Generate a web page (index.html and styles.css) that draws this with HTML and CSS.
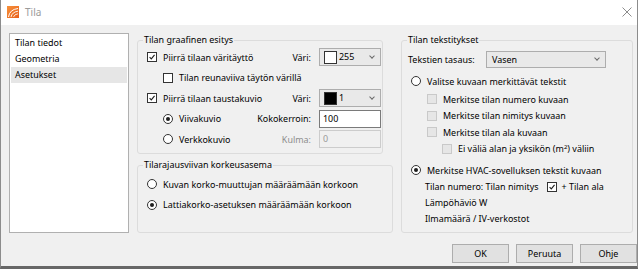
FILE: index.html
```html
<!DOCTYPE html>
<html>
<head>
<meta charset="utf-8">
<title>Tila</title>
<link rel="stylesheet" href="styles.css">
</head>
<body>
<div class="window">
  <div class="titlebar">
    <svg class="app-icon" width="12" height="12" viewBox="0 0 12 12">
      <defs>
        <linearGradient id="og" x1="0" y1="0" x2="1" y2="1">
          <stop offset="0" stop-color="#f7913a"/>
          <stop offset="1" stop-color="#e8601c"/>
        </linearGradient>
      </defs>
      <rect width="12" height="12" fill="url(#og)"/>
      <path d="M1.5 11 Q2.5 3.5 11 2.5" fill="none" stroke="#fff" stroke-width="1"/>
      <path d="M4 11 Q5 6 11 5.2" fill="none" stroke="#fff" stroke-width="0.9"/>
      <path d="M6.5 11 Q7.3 8.3 11 7.8" fill="none" stroke="#fff" stroke-width="0.8"/>
    </svg>
    <span class="title">Tila</span>
    <svg class="close" width="10" height="10" viewBox="0 0 10 10">
      <path d="M0.5 0.5 L9.5 9.5 M9.5 0.5 L0.5 9.5" stroke="#8c8c8c" stroke-width="1"/>
    </svg>
  </div>
  <div class="client">
    <div class="main">
      <ul class="navlist">
        <li>Tilan tiedot</li>
        <li>Geometria</li>
        <li class="selected">Asetukset</li>
      </ul>
      <div class="midcol">
        <fieldset class="group g1">
          <legend>Tilan graafinen esitys</legend>
          <div class="g1-grid">
            <label class="opt"><span class="cb"><svg viewBox="0 0 10 10"><path d="M2 5.2 L4.1 7.3 L8.2 2.4"/></svg></span><span>Piirrä tilaan väritäyttö</span></label>
            <span class="flabel">Väri:</span>
            <div class="combo"><span class="swatch white"></span><span class="cval">255</span><span class="arrow"></span></div>

            <label class="opt indent full"><span class="cb"></span><span>Tilan reunaviiva täytön värillä</span></label>

            <label class="opt"><span class="cb"><svg viewBox="0 0 10 10"><path d="M2 5.2 L4.1 7.3 L8.2 2.4"/></svg></span><span>Piirrä tilaan taustakuvio</span></label>
            <span class="flabel">Väri:</span>
            <div class="combo"><span class="swatch black"></span><span class="cval">1</span><span class="arrow"></span></div>

            <label class="opt indent"><span class="rb on"></span><span>Viivakuvio</span></label>
            <span class="flabel">Kokokerroin:</span>
            <div class="field">100</div>

            <label class="opt indent"><span class="rb"></span><span>Verkkokuvio</span></label>
            <span class="flabel dim">Kulma:</span>
            <div class="field disabled">0</div>
          </div>
        </fieldset>
        <fieldset class="group g2">
          <legend>Tilarajausviivan korkeusasema</legend>
          <div class="g2-list">
            <label class="opt"><span class="rb"></span><span>Kuvan korko-muuttujan määräämään korkoon</span></label>
            <label class="opt"><span class="rb on"></span><span>Lattiakorko-asetuksen määräämään korkoon</span></label>
          </div>
        </fieldset>
      </div>
      <fieldset class="group g3">
        <legend>Tilan tekstitykset</legend>
        <div class="g3-body">
          <div class="align-row">
            <span class="align-label">Tekstien tasaus:</span>
            <div class="combo wide"><span class="cval">Vasen</span><span class="arrow"></span></div>
          </div>
          <div class="r-row"><label class="opt"><span class="rb"></span><span>Valitse kuvaan merkittävät tekstit</span></label></div>
          <div class="sub">
            <div class="c-row"><label class="opt"><span class="cb off"></span><span>Merkitse tilan numero kuvaan</span></label></div>
            <div class="c-row"><label class="opt"><span class="cb off"></span><span>Merkitse tilan nimitys kuvaan</span></label></div>
            <div class="c-row"><label class="opt"><span class="cb off"></span><span>Merkitse tilan ala kuvaan</span></label></div>
            <div class="c-row subsub"><label class="opt"><span class="cb off"></span><span>Ei väliä alan ja yksikön (m<sup>2</sup>) väliin</span></label></div>
          </div>
          <div class="r-row hvac"><label class="opt"><span class="rb on"></span><span>Merkitse HVAC-sovelluksen tekstit kuvaan</span></label></div>
          <div class="hvac-lines">
            <div class="t-row"><span>Tilan numero: Tilan nimitys</span><span class="cb inline"><svg viewBox="0 0 10 10"><path d="M2 5.2 L4.1 7.3 L8.2 2.4"/></svg></span><span>+ Tilan ala</span></div>
            <div class="t-row"><span>Lämpöhäviö W</span></div>
            <div class="t-row"><span>Ilmamäärä / IV-verkostot</span></div>
          </div>
        </div>
      </fieldset>
    </div>
    <div class="buttons">
      <button class="btn">OK</button>
      <button class="btn">Peruuta</button>
      <button class="btn">Ohje</button>
    </div>
  </div>
</div>
</body>
</html>
```

FILE: styles.css
```css
* { box-sizing: border-box; }

html, body {
  margin: 0;
  padding: 0;
  background: #ffffff;
}

body {
  font-family: "Noto Sans", "Open Sans", sans-serif;
  font-size: 8.95px;
  color: #000;
}

.window {
  width: 638px;
  height: 269px;
  border-left: 1px solid #8c8c8c;
  border-right: 1px solid #8c8c8c;
  border-bottom: 3px solid #676767;
  background: #f0f0f0;
  display: flex;
  flex-direction: column;
}

.titlebar {
  height: 25px;
  background: #ffffff;
  display: flex;
  align-items: center;
  padding-left: 6px;
  padding-right: 5px;
}

.app-icon {
  display: block;
  margin-top: -1px;
}

.title {
  margin-left: 6px;
  color: #9b9b9b;
  font-size: 10px;
  line-height: 14px;
  margin-top: -1px;
}

.close {
  margin-left: auto;
  margin-top: -1px;
}

.client {
  flex: 1;
  padding: 8px 0 0 8px;
  display: flex;
  flex-direction: column;
}

.main {
  display: flex;
  height: 200px;
  gap: 8px;
}

.navlist {
  list-style: none;
  margin: 0;
  padding: 1px 0 0 0;
  width: 120px;
  height: 200px;
  flex: none;
  background: #ffffff;
  border: 1px solid #b0b0b0;
}

.navlist li {
  height: 16px;
  line-height: 16px;
  padding-left: 4px;
  margin: 0 1px;
}

.navlist li.selected {
  background: #e6e6e6;
}

.midcol {
  width: 256px;
  flex: none;
  display: flex;
  flex-direction: column;
}

.group {
  margin: 0;
  padding: 0;
  border: 1px solid #dcdcdc;
  border-radius: 3px;
  min-width: 0;
}

.group legend {
  padding: 0 1px;
  margin-left: 5px;
  line-height: 14px;
  height: 14px;
}

.g1 {
  width: 246px;
  height: 121px;
}

.g1-grid {
  display: grid;
  grid-template-columns: minmax(0, 1fr) auto 62px;
  grid-auto-rows: 20.5px;
  column-gap: 8px;
  align-items: center;
  padding: 0 1px 0 9px;
}

.g1-grid .full {
  grid-column: 1 / -1;
}

.g2 {
  width: 256px;
  height: 75px;
  margin-top: 4px;
}

.g2-list {
  padding: 2px 0 0 9px;
  display: grid;
  grid-auto-rows: 20.5px;
  align-items: center;
}

.g3 {
  width: 232px;
  height: 200px;
  flex: none;
}

.g3-body {
  padding: 0 0 0 9px;
}

.opt {
  display: inline-flex;
  align-items: center;
  gap: 6px;
  white-space: nowrap;
}

.opt.indent {
  margin-left: 16px;
}

.flabel {
  text-align: right;
  white-space: nowrap;
}

.flabel.dim {
  color: #8d8d8d;
}

.cb {
  width: 10px;
  height: 10px;
  border: 1px solid #333333;
  background: #ffffff;
  flex: none;
  display: inline-flex;
  align-items: center;
  justify-content: center;
}

.cb svg {
  width: 8px;
  height: 8px;
}

.cb svg path {
  fill: none;
  stroke: #1e1e1e;
  stroke-width: 1.4;
}

.cb.off {
  border-color: #c9c9c9;
  background: #e6e6e6;
}

.rb {
  width: 10px;
  height: 10px;
  border: 1px solid #333333;
  border-radius: 50%;
  background: #ffffff;
  flex: none;
  display: inline-flex;
  align-items: center;
  justify-content: center;
}

.rb.on::after {
  content: "";
  width: 4px;
  height: 4px;
  border-radius: 50%;
  background: #1e1e1e;
}

.combo {
  height: 18px;
  border: 1px solid #adadad;
  background: #e9e9e9;
  display: flex;
  align-items: center;
  padding-left: 4px;
}

.combo.wide {
  height: 17px;
}

.swatch {
  width: 13px;
  height: 13px;
  border: 1px solid #333;
  flex: none;
  margin-right: 2px;
}

.swatch.white { background: #ffffff; }
.swatch.black { background: #000000; }

.cval {
  line-height: 14px;
}

.combo.wide .cval {
  padding-left: 1px;
}

.arrow {
  margin-left: auto;
  margin-right: 6px;
  width: 4px;
  height: 4px;
  border-right: 1px solid #6a6a6a;
  border-bottom: 1px solid #6a6a6a;
  transform: rotate(45deg);
  margin-top: -3px;
}

.field {
  height: 18px;
  border: 1px solid #7a7a7a;
  background: #ffffff;
  padding-left: 3px;
  line-height: 16px;
}

.field.disabled {
  border-color: #cccccc;
  background: #f0f0f0;
  color: #9a9a9a;
}

.align-row {
  display: grid;
  grid-template-columns: 78px 120px;
  align-items: center;
  height: 24px;
  padding-top: 1px;
  margin-left: -3px;
}

.r-row {
  height: 20px;
  display: flex;
  align-items: center;
}

.sub {
  padding-left: 16px;
}

.c-row {
  height: 16.5px;
  display: flex;
  align-items: center;
}

.c-row.subsub {
  padding-left: 15px;
}

.c-row sup {
  font-size: 6px;
  line-height: 0;
  vertical-align: 3px;
}

.r-row.hvac {
  margin-top: 4px;
  height: 18px;
}

.hvac-lines {
  padding-left: 14px;
}

.t-row {
  height: 15.7px;
  display: flex;
  align-items: center;
  white-space: nowrap;
}

.cb.inline {
  margin: 0 5px 0 8px;
}

.buttons {
  display: flex;
  justify-content: flex-end;
  gap: 7px;
  margin-top: 11px;
}

.btn {
  width: 57px;
  height: 19px;
  margin: 0;
  padding: 0;
  border: 1px solid #adadad;
  background: #e1e1e1;
  font-family: "Noto Sans", "Open Sans", sans-serif;
  font-size: 8.95px;
  color: #000;
  line-height: 14px;
}
```
